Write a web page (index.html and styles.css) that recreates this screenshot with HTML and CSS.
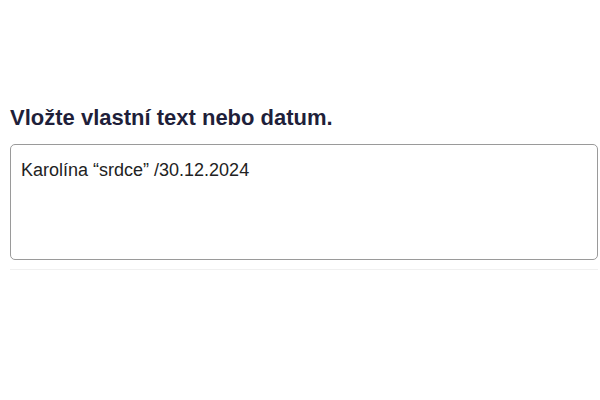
FILE: index.html
```html
<!DOCTYPE html>
<html lang="cs">
<head>
    <meta charset="UTF-8">
    <meta name="viewport" content="width=device-width, initial-scale=1.0">
    <link rel="stylesheet" href="styles.css">
    <title>Vlastní text</title>
</head>
<body>
    <div class="custom-field">
        <label for="custom-text" class="field-label">Vložte vlastní text nebo datum.</label>
        <textarea id="custom-text" class="field-input" rows="4">Karolína “srdce” /30.12.2024</textarea>
        <div class="field-divider"></div>
    </div>
</body>
</html>
```

FILE: styles.css
```css
*{
    box-sizing: border-box;
}

body{
    margin: 0;
    background-color: #fff;
    font-family: "Liberation Sans", Arial, sans-serif;
}

.custom-field{
    padding: 104px 2px 0 10px;
}

.field-label{
    display: block;
    font-size: 22px;
    font-weight: bold;
    color: #1f1f3a;
    line-height: 28px;
    margin-bottom: 12px;
}

.field-input{
    display: block;
    width: 100%;
    height: 116px;
    margin: 0;
    padding: 14px 10px;
    font-family: inherit;
    font-size: 18px;
    line-height: 22px;
    color: #222;
    border: 1.5px solid #9a9a9a;
    border-radius: 5px;
    outline: none;
    resize: none;
}

.field-divider{
    height: 1px;
    margin-top: 9px;
    background-color: #f0f0f0;
}
```
